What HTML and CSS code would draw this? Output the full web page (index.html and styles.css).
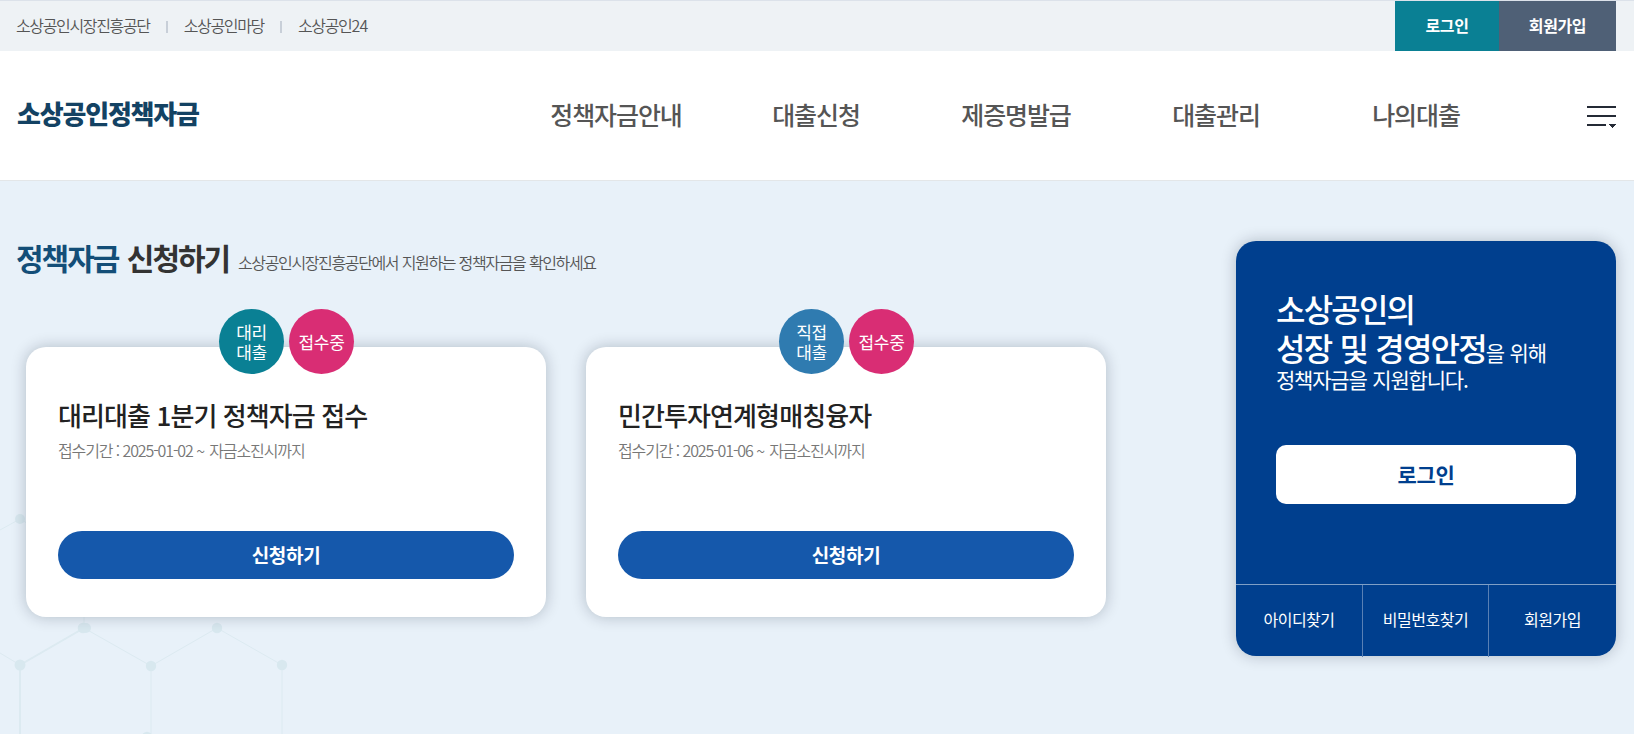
FILE: index.html
```html
<!DOCTYPE html>
<html lang="ko">
<head>
<meta charset="utf-8">
<title>소상공인정책자금</title>
<link rel="stylesheet" href="styles.css">
</head>
<body>
<div class="topbar">
  <ul class="sites">
    <li>소상공인시장진흥공단</li>
    <li>소상공인마당</li>
    <li>소상공인<span class="num">24</span></li>
  </ul>
  <div class="account">
    <a class="account-login">로그인</a>
    <a class="account-join">회원가입</a>
  </div>
</div>
<header class="header">
  <h1 class="logo">소상공인정책자금</h1>
  <nav class="nav">
    <a>정책자금안내</a>
    <a>대출신청</a>
    <a>제증명발급</a>
    <a>대출관리</a>
    <a>나의대출</a>
  </nav>
  <svg class="menu" width="29" height="23" viewBox="0 0 29 23">
    <path d="M0 0h29v2H0zM0 9h29v2H0zM0 18h19v2H0zM22 18h7v1h-1v1h-1v1h-1v1h-1v-1h-1v-1h-1v-1h-1z" fill="#242a35" shape-rendering="crispEdges"/>
  </svg>
</header>
<main class="main">
  <svg class="pattern" width="300" height="234" viewBox="0 500 300 234" fill="none" stroke="#dceaf1">
    <path d="M0 530 20 519 84 556M84 556V628L20 665M0 653 20 665M84 628 151 666 217 628 282 665M151 666V740M282 665V740"/>
    <path d="M84 628 20 665V740" stroke-width="2"/>
    <g fill="#d8e8ef" stroke="none">
      <circle cx="20" cy="519" r="5"/>
      <circle cx="83" cy="628" r="5.3"/><circle cx="86" cy="628" r="5"/>
      <circle cx="217" cy="628" r="5.2"/>
      <circle cx="20" cy="665" r="5.5"/>
      <circle cx="151" cy="666" r="5.2"/>
      <circle cx="282" cy="665" r="5.2"/>
      <circle cx="147" cy="737" r="5.2"/>
    </g>
  </svg>
  <section class="funds">
    <div class="heading">
      <h2><em>정책자금</em> 신청하기</h2>
      <p>소상공인시장진흥공단에서 지원하는 정책자금을 확인하세요</p>
    </div>
    <div class="cards">
      <article class="card">
        <div class="badges">
          <span class="badge badge-agency">대리<br>대출</span>
          <span class="badge badge-open">접수중</span>
        </div>
        <h3>대리대출 1분기 정책자금 접수</h3>
        <p class="period">접수기간 : 2025-01-02 <span class="tilde">~</span> 자금소진시까지</p>
        <a class="apply">신청하기</a>
      </article>
      <article class="card">
        <div class="badges">
          <span class="badge badge-direct">직접<br>대출</span>
          <span class="badge badge-open">접수중</span>
        </div>
        <h3>민간투자연계형매칭융자</h3>
        <p class="period">접수기간 : 2025-01-06 <span class="tilde">~</span> 자금소진시까지</p>
        <a class="apply">신청하기</a>
      </article>
    </div>
  </section>
  <aside class="panel">
    <div class="panel-body">
      <p class="slogan">소상공인의</p>
      <p class="slogan">성장 및 경영안정<span>을 위해</span></p>
      <p class="slogan-end">정책자금을 지원합니다.</p>
      <a class="login">로그인</a>
    </div>
    <div class="panel-links">
      <a>아이디찾기</a>
      <a>비밀번호찾기</a>
      <a>회원가입</a>
    </div>
  </aside>
</main>
</body>
</html>
```

FILE: styles.css
```css
* { box-sizing: border-box; margin: 0; padding: 0; }

body {
  width: 1634px;
  height: 734px;
  overflow: hidden;
  background: #fff;
  color: #555;
  font-family: "Noto Sans CJK KR", "Noto Sans", sans-serif;
  font-size: 16px;
  white-space: nowrap;
}

/* Top utility bar */
.topbar {
  display: flex;
  justify-content: space-between;
  height: 51px;
  padding: 0 18px 0 16px;
  border-top: 1px solid #dce2ea;
  background: #eef2f5;
}
.sites { display: flex; list-style: none; }
.sites li {
  display: flex;
  align-items: center;
  height: 48px;
  font-weight: 350;
  letter-spacing: -1.35px;
}
.sites li + li::before {
  content: "";
  width: 2px;
  height: 12px;
  margin: 4px 16px 0 16px;
  background: #c8cfd8;
}
.num { letter-spacing: -0.8px; }
.account { display: flex; }
.account a {
  line-height: 48px;
  color: #fff;
  font-weight: 700;
  text-align: center;
  letter-spacing: -0.4px;
}
.account-login { width: 104px; background: #0a8094; }
.account-join { width: 117px; background: #4f6076; }

/* Header */
.header {
  display: flex;
  height: 130px;
  padding: 0 18px 0 17px;
  border-bottom: 1px solid #e3e6e8;
}
.logo {
  width: 499px;
  line-height: 124px;
  font-size: 26px;
  font-weight: 900;
  letter-spacing: -1.2px;
  color: #134263;
}
.nav { display: grid; grid-template-columns: repeat(5, 200px); }
.nav a {
  line-height: 127px;
  font-size: 25px;
  font-weight: 500;
  letter-spacing: -1.1px;
  text-align: center;
}
.menu { margin: 55px 0 0 auto; }

/* Main area */
.main {
  position: relative;
  display: flex;
  justify-content: space-between;
  height: 553px;
  padding: 60px 18px 0 16px;
  background: #e8f1f9;
}
.pattern { position: absolute; left: 0; top: 319px; }
.funds { position: relative; }
.heading { display: flex; height: 106px; }
.heading h2 {
  width: 222px;
  line-height: 32px;
  font-size: 30px;
  font-weight: 700;
  letter-spacing: -2px;
  word-spacing: 2px;
  color: #333;
}
.heading em { font-style: normal; color: #134e78; }
.heading p {
  line-height: 43px;
  font-weight: 350;
  letter-spacing: -1.37px;
  word-spacing: 0.4px;
}
.cards { display: flex; gap: 40px; padding-left: 10px; }
.card {
  position: relative;
  width: 520px;
  height: 270px;
  padding: 49px 32px 0;
  border-radius: 20px;
  background: #fff;
  box-shadow: 0 0 15px rgba(0, 20, 40, 0.24);
}
.badges {
  position: absolute;
  left: 193px;
  top: -38px;
  display: flex;
  gap: 5px;
}
.badge {
  display: flex;
  align-items: center;
  justify-content: center;
  width: 65px;
  height: 65px;
  border-radius: 50%;
  line-height: 20px;
  font-size: 17px;
  color: #fff;
  letter-spacing: -0.3px;
}
.badge-agency { background: #0a8094; }
.badge-direct { background: #2f7bb0; }
.badge-open { background: #d92d74; }
.card h3 {
  line-height: 37px;
  font-size: 26px;
  font-weight: 500;
  letter-spacing: -0.9px;
  color: #222;
}
.period {
  margin-top: 5px;
  line-height: 24px;
  font-weight: 350;
  letter-spacing: -1.1px;
  color: #777;
}
.tilde { margin: 0 2px 0 0; }
.apply {
  display: block;
  height: 48px;
  margin-top: 69px;
  border-radius: 24px;
  background: #1558ab;
  line-height: 48px;
  font-size: 19px;
  font-weight: 700;
  letter-spacing: -0.3px;
  text-align: center;
  color: #fff;
}

/* Login panel */
.panel {
  position: relative;
  width: 380px;
  height: 415px;
  border-radius: 20px;
  background: #003f8e;
  box-shadow: 0 0 15px rgba(0, 20, 40, 0.24);
  color: #fff;
}
.panel-body { height: 343px; padding: 48px 40px 0; }
.slogan {
  height: 39px;
  line-height: 39px;
  font-size: 32px;
  font-weight: 500;
  letter-spacing: -1.8px;
  word-spacing: 1px;
}
.slogan span,
.slogan-end {
  font-size: 21px;
  font-weight: 400;
  letter-spacing: -1.2px;
  word-spacing: 1px;
}
.slogan span { line-height: 1; }
.slogan-end { height: 27px; line-height: 25px; }
.login {
  display: block;
  height: 59px;
  margin-top: 51px;
  border-radius: 10px;
  background: #fff;
  line-height: 58px;
  font-size: 21px;
  font-weight: 600;
  letter-spacing: -0.3px;
  text-align: center;
  color: #003f8e;
}
.panel-links {
  display: grid;
  grid-template-columns: 127px 126px 127px;
  height: 73px;
  border-top: 1px solid #7f9fc6;
}
.panel-links a {
  line-height: 69px;
  text-align: center;
  letter-spacing: -0.5px;
}
.panel-links a:not(:last-child) { border-right: 1px solid #5980b4; }
```
